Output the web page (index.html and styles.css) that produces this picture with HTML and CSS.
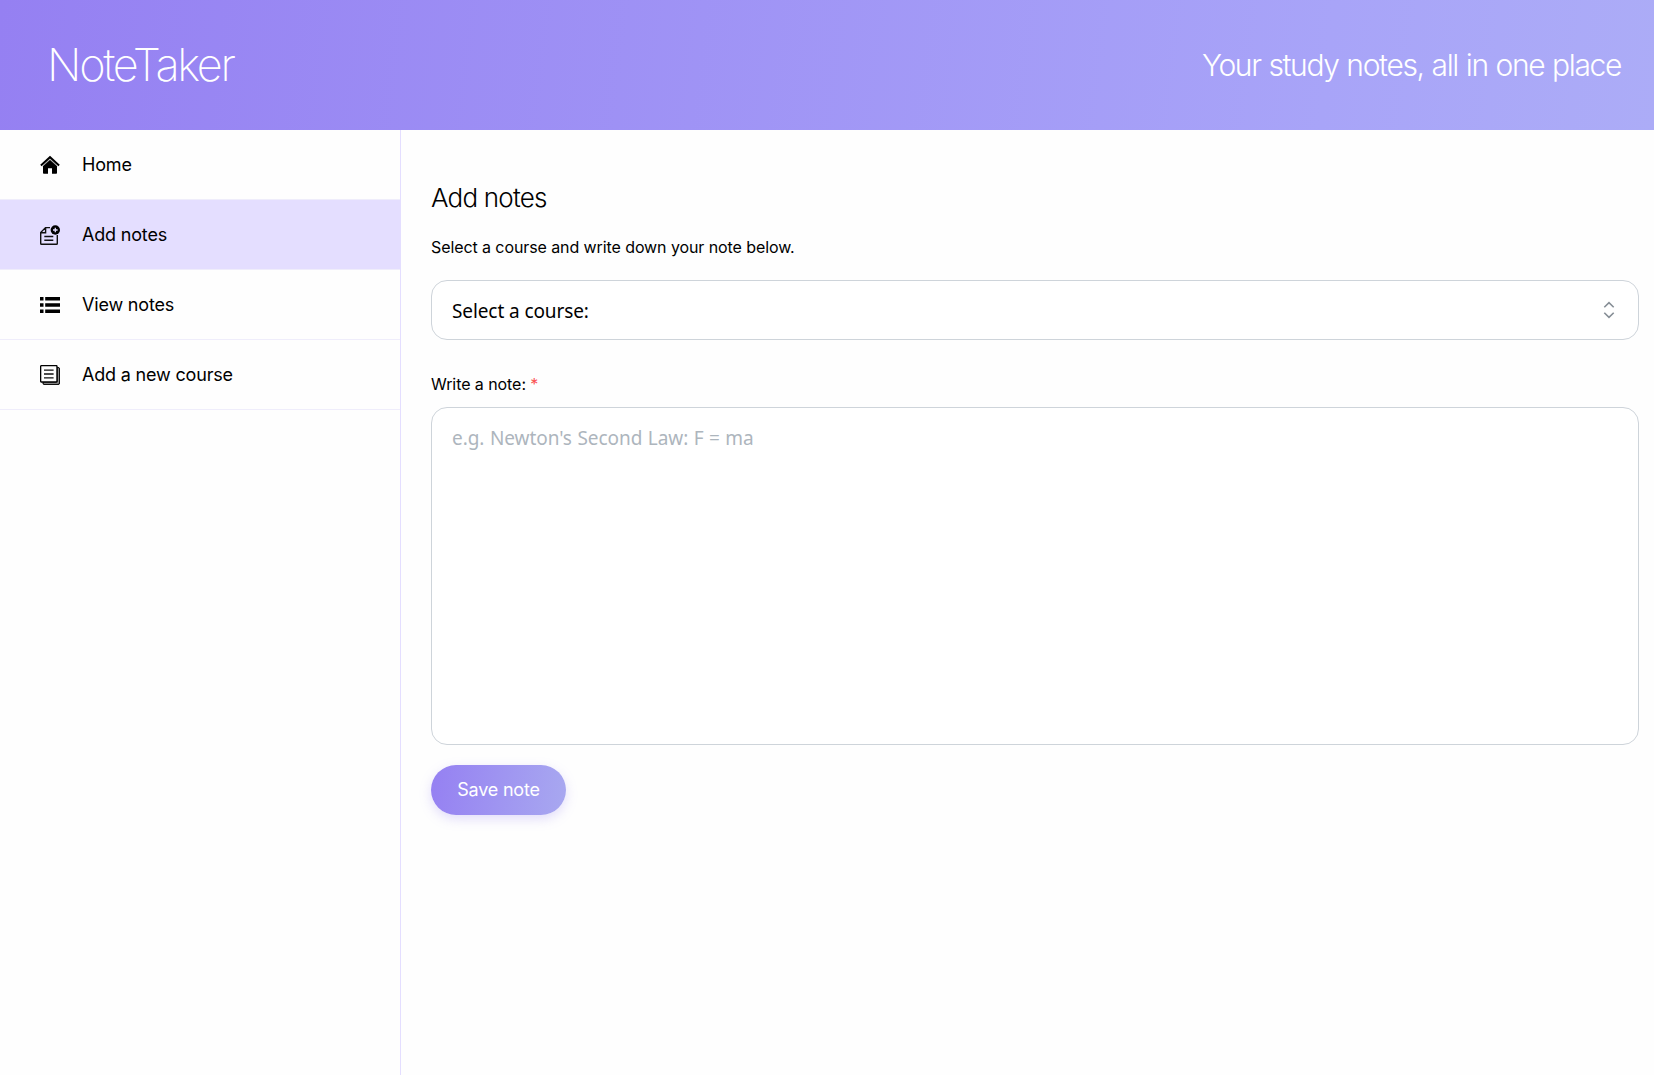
FILE: index.html
```html
<!DOCTYPE html>
<html lang="en">
<head>
<meta charset="utf-8">
<title>NoteTaker</title>
<link rel="stylesheet" href="styles.css">
</head>
<body>
<header class="header">
  <h1 class="brand">NoteTaker</h1>
  <p class="tagline">Your study notes, all in one place</p>
</header>
<div class="layout">
  <nav class="sidebar">
    <a class="nav-item">
      <svg class="icon" viewBox="0 0 20 20"><path d="M3 10.800 10 4.600l7 6.200V18a.8.8 0 0 1-.8.8H12V13.300H8v5.500H3.800A.8.8 0 0 1 3 18z"/><path d="M.9 10.600 10 2.200l9.100 8.400" fill="none" stroke="#000" stroke-width="2"/><path d="M2.600 11.300 10 4.500l7.400 6.800" fill="none" stroke="#aaa" stroke-width=".8"/></svg>
      <span>Home</span>
    </a>
    <a class="nav-item active">
      <svg class="icon" viewBox="0 0 20 20"><g fill="none" stroke="#111" stroke-width="1.400"><path d="M10 2.600H5.500L.7 7.600V18.500q0 .8.8.8h15q.8 0 .8-.8V10M5.600 2.800V7.700H.8M4.300 11.500h9M4.300 15.300h9"/></g><circle cx="15.300" cy="5" r="4.700"/><path d="M15.300 2.700v4.600M13 5h4.600" stroke="#e4deff" stroke-width="1.300"/></svg>
      <span>Add notes</span>
    </a>
    <a class="nav-item">
      <svg class="icon" viewBox="0 0 20 20"><path d="M0 2h3.500v3.500H0zM5.200 2H20v3.500H5.200zM0 8.200h3.500v3.600H0zM5.200 8.200H20v3.600H5.200zM0 14.500h3.500V18H0zM5.200 14.500H20V18H5.200z"/></svg>
      <span>View notes</span>
    </a>
    <a class="nav-item">
      <svg class="icon" viewBox="0 0 20 20"><path d="M17 2.500h1.500l.9.900v15.100l-.9.900H4l-.9-.9V17H17z" fill="#aaa" stroke="#111" stroke-width="1.200"/><rect x=".6" y=".6" width="16.400" height="16.400" rx="1" fill="#fefefe" stroke="#000" stroke-width="1.400"/><path d="M4 5.200h9.600M4 9h9.600M4 12.800h9.600" stroke="#111" stroke-width="1.300"/></svg>
      <span>Add a new course</span>
    </a>
  </nav>
  <main class="content">
    <h2 class="title">Add notes</h2>
    <p class="intro">Select a course and write down your note below.</p>
    <div class="select">
      <span>Select a course:</span>
      <svg class="chevrons" viewBox="0 0 12 18"><path d="M1.300 6.200 6 1.600l4.700 4.600M1.300 11.800 6 16.400l4.700-4.600" fill="none" stroke="#868e96" stroke-width="1.600"/></svg>
    </div>
    <label class="label" for="note">Write a note: <span class="required">*</span></label>
    <textarea class="note" id="note" placeholder="e.g. Newton's Second Law: F = ma"></textarea>
    <button class="save">Save note</button>
  </main>
</div>
</body>
</html>
```
FILE: styles.css
```css
* { box-sizing: border-box; }

body {
  margin: 0;
  min-height: 100vh;
  display: flex;
  flex-direction: column;
  background: #fefefe;
  color: #000;
  font-family: Inter, sans-serif;
}

h1, h2, p { margin: 0; }

.header {
  height: 130px;
  padding: 0 33px 0 47px;
  display: flex;
  align-items: center;
  justify-content: space-between;
  background: linear-gradient(97deg, #9580f2, #a8a4f8 80%, #acacf7);
  color: #fff;
}

.brand {
  padding-bottom: 1px;
  font-size: 45px;
  font-weight: 250;
  letter-spacing: -2.300px;
}

.tagline {
  font-size: 30px;
  font-weight: 300;
  letter-spacing: -1.350px;
  word-spacing: 0.700px;
}

.layout {
  flex: 1;
  display: flex;
}

.sidebar {
  width: 401px;
  flex: none;
  border-right: 1px solid #e4deff;
}

.nav-item {
  height: 70px;
  padding-left: 40px;
  display: flex;
  align-items: center;
  gap: 22px;
  border-bottom: 1px solid #efedfb;
  font-size: 18px;
  letter-spacing: -0.180px;
}

.nav-item.active { background: #e4deff; }

.icon {
  width: 20px;
  height: 20px;
}

.content {
  flex: 1;
  padding: 52px 15px 0 30px;
  display: flex;
  flex-direction: column;
}

.title {
  font-size: 26px;
  font-weight: 300;
  line-height: 32px;
  letter-spacing: -0.800px;
}

.intro {
  margin-top: 21px;
  font-size: 16px;
  line-height: 24px;
  letter-spacing: -0.090px;
}

.select {
  height: 60px;
  margin-top: 21px;
  padding: 0 23px 0 20px;
  display: flex;
  align-items: center;
  justify-content: space-between;
  border: 1px solid #ced4da;
  border-radius: 16px;
  background: #fff;
  font-family: "Noto Sans", sans-serif;
  font-size: 19px;
  letter-spacing: -0.100px;
}

.select span { padding-top: 2px; }

.chevrons {
  width: 12px;
  height: 18px;
}

.label {
  margin-top: 32px;
  font-size: 16px;
  line-height: 24px;
  letter-spacing: -0.070px;
}

.required { color: #fa5252; }

.note {
  height: 338px;
  margin-top: 11px;
  padding: 16px 20px;
  border: 1px solid #ced4da;
  border-radius: 16px;
  background: #fff;
  resize: none;
  font-family: "Noto Sans", sans-serif;
  font-size: 19px;
  line-height: 28px;
  letter-spacing: -0.050px;
  word-spacing: 0.600px;
}

.note::placeholder { color: #adb5bd; }

.save {
  width: 135px;
  height: 50px;
  margin-top: 20px;
  padding: 0 0 2px;
  border: 0;
  border-radius: 25px;
  background: linear-gradient(97deg, #9580f2, #a8a8f0);
  box-shadow: 0 4px 12px rgba(149, 128, 242, 0.27);
  color: #fff;
  font-family: inherit;
  font-size: 18px;
  letter-spacing: -0.200px;
}
```
